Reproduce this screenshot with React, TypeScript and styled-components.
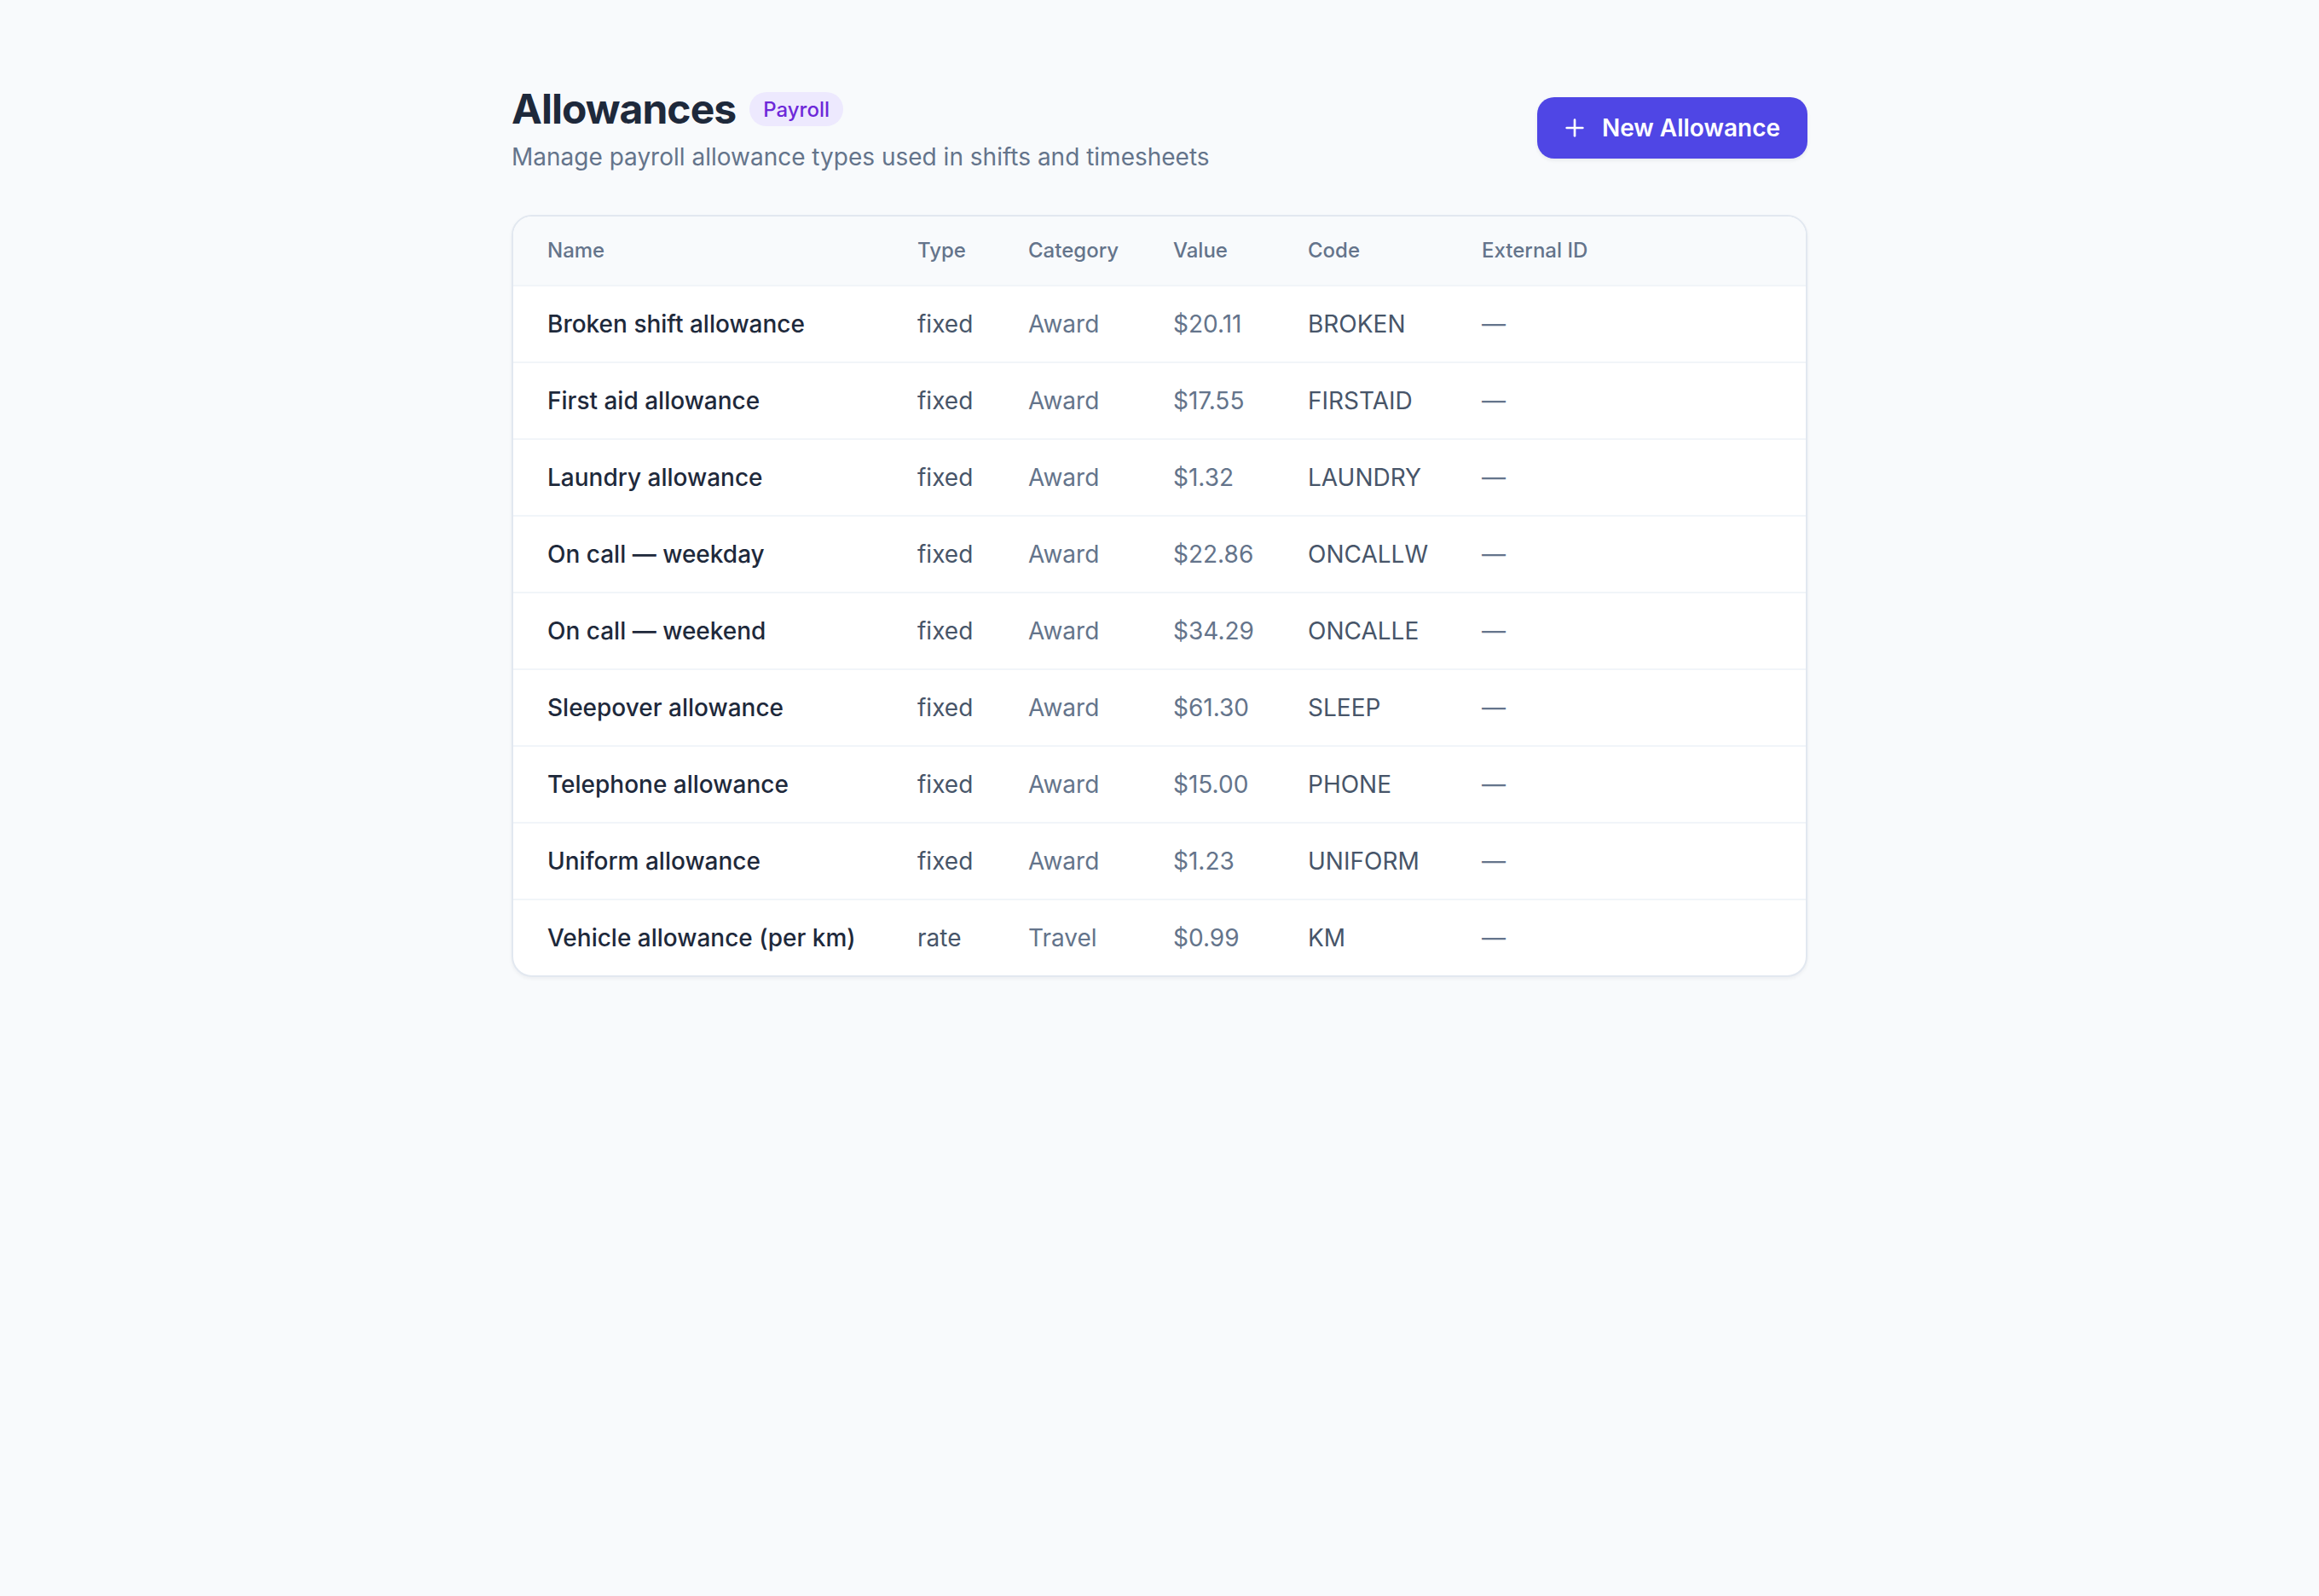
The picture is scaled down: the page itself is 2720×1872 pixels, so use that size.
import styled, { createGlobalStyle } from 'styled-components';
import { Plus } from 'lucide-react';

const GlobalStyle = createGlobalStyle`
	html, body {
		margin: 0;
		padding: 0;
		background: #f8fafc;
	}
	body {
		zoom: 2;
		font-family: Inter, 'Noto Sans', sans-serif;
		color: #1e293b;
		-webkit-font-smoothing: antialiased;
	}
`;

const Page = styled.main`
	min-height: 936px;
	padding: 48px 0;
	box-sizing: border-box;
`;

const Container = styled.div`
	width: 760px;
	margin: 0 auto;
`;

const Header = styled.header`
	display: flex;
	align-items: center;
	justify-content: space-between;
	margin-bottom: 24px;
`;

const TitleRow = styled.div`
	display: flex;
	align-items: center;
	gap: 8px;
`;

const Title = styled.h1`
	margin: 0;
	font-size: 24px;
	line-height: 32px;
	font-weight: 700;
	letter-spacing: -0.02em;
	color: #1e293b;
`;

const Badge = styled.span`
	display: inline-flex;
	align-items: center;
	height: 20px;
	padding: 0 8px;
	border-radius: 999px;
	background: #ede9fe;
	color: #6d28d9;
	font-size: 12px;
	font-weight: 500;
`;

const Subtitle = styled.p`
	margin: 2px 0 0;
	font-size: 14px;
	line-height: 20px;
	color: #64748b;
`;

const PrimaryButton = styled.button`
	display: inline-flex;
	align-items: center;
	gap: 8px;
	height: 36px;
	padding: 0 16px 0 14px;
	border: none;
	border-radius: 10px;
	background: #4f46e5;
	color: #ffffff;
	font-family: inherit;
	font-size: 14px;
	font-weight: 600;
	cursor: pointer;
	box-shadow: 0 1px 2px rgba(15, 23, 42, 0.08);
`;

const Card = styled.div`
	background: #ffffff;
	border: 1px solid #e2e8f0;
	border-radius: 12px;
	overflow: hidden;
	box-shadow: 0 1px 2px rgba(15, 23, 42, 0.05);
`;

const columns = '217px 65px 85px 79px 102px 1fr';

const HeadRow = styled.div`
	display: grid;
	grid-template-columns: ${columns};
	background: #f8fafc;
	border-bottom: 1px solid #f1f5f9;
`;

const HeadCell = styled.div`
	padding: 10px 0 10px 20px;
	font-size: 12px;
	line-height: 20px;
	font-weight: 500;
	color: #64748b;
`;

const Row = styled.div`
	display: grid;
	grid-template-columns: ${columns};
	border-bottom: 1px solid #f1f5f9;

	&:last-child {
		border-bottom: none;
	}
`;

const Cell = styled.div<{ $tone?: 'name' | 'dark' | 'muted' }>`
	padding: 12px 0 12px 20px;
	font-size: 14px;
	line-height: 20px;
	white-space: nowrap;
	font-weight: ${(p) => (p.$tone === 'name' ? 500 : 400)};
	color: ${(p) =>
		p.$tone === 'name' ? '#1e293b' : p.$tone === 'dark' ? '#475569' : '#64748b'};
`;

const allowances = [
	{ name: 'Broken shift allowance', type: 'fixed', category: 'Award', value: '$20.11', code: 'BROKEN' },
	{ name: 'First aid allowance', type: 'fixed', category: 'Award', value: '$17.55', code: 'FIRSTAID' },
	{ name: 'Laundry allowance', type: 'fixed', category: 'Award', value: '$1.32', code: 'LAUNDRY' },
	{ name: 'On call — weekday', type: 'fixed', category: 'Award', value: '$22.86', code: 'ONCALLW' },
	{ name: 'On call — weekend', type: 'fixed', category: 'Award', value: '$34.29', code: 'ONCALLE' },
	{ name: 'Sleepover allowance', type: 'fixed', category: 'Award', value: '$61.30', code: 'SLEEP' },
	{ name: 'Telephone allowance', type: 'fixed', category: 'Award', value: '$15.00', code: 'PHONE' },
	{ name: 'Uniform allowance', type: 'fixed', category: 'Award', value: '$1.23', code: 'UNIFORM' },
	{ name: 'Vehicle allowance (per km)', type: 'rate', category: 'Travel', value: '$0.99', code: 'KM' },
];

const App = () => {
	return (
		<>
			<GlobalStyle />
			<Page>
				<Container>
					<Header>
						<div>
							<TitleRow>
								<Title>Allowances</Title>
								<Badge>Payroll</Badge>
							</TitleRow>
							<Subtitle>Manage payroll allowance types used in shifts and timesheets</Subtitle>
						</div>
						<PrimaryButton>
							<Plus size={16} strokeWidth={2} />
							New Allowance
						</PrimaryButton>
					</Header>

					<Card>
						<HeadRow>
							<HeadCell>Name</HeadCell>
							<HeadCell>Type</HeadCell>
							<HeadCell>Category</HeadCell>
							<HeadCell>Value</HeadCell>
							<HeadCell>Code</HeadCell>
							<HeadCell>External ID</HeadCell>
						</HeadRow>
						{allowances.map((a) => (
							<Row key={a.code}>
								<Cell $tone='name'>{a.name}</Cell>
								<Cell $tone='dark'>{a.type}</Cell>
								<Cell $tone='muted'>{a.category}</Cell>
								<Cell $tone='muted'>{a.value}</Cell>
								<Cell $tone='dark'>{a.code}</Cell>
								<Cell $tone='muted'>—</Cell>
							</Row>
						))}
					</Card>
				</Container>
			</Page>
		</>
	);
};

export default App;
